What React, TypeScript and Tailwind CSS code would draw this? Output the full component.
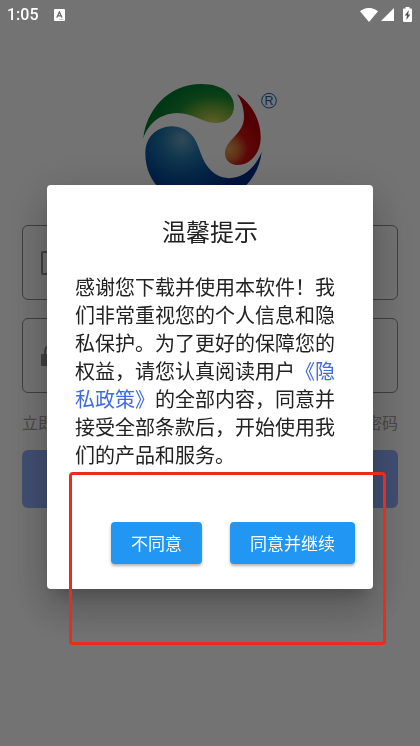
import { ReactNode } from 'react';

interface FieldProps {
  label: string;
  type: string;
  icon: ReactNode;
}

const Logo = () => (
  <svg viewBox="39 27 402 360" className="h-[120px] w-[134px]" role="img" aria-label="logo">
    <defs>
      <radialGradient id="green" gradientUnits="userSpaceOnUse" cx="248" cy="150" r="170" gradientTransform="translate(0 37) scale(1 .75)">
        <stop offset="0" stopColor="#dcd860" />
        <stop offset=".35" stopColor="#84b43c" />
        <stop offset=".7" stopColor="#188c34" />
        <stop offset="1" stopColor="#007a30" />
      </radialGradient>
      <radialGradient id="red" gradientUnits="userSpaceOnUse" cx="296" cy="222" r="115">
        <stop offset="0" stopColor="#e8a050" />
        <stop offset=".25" stopColor="#d87038" />
        <stop offset=".5" stopColor="#d01010" />
        <stop offset="1" stopColor="#b40008" />
      </radialGradient>
      <radialGradient id="blue" gradientUnits="userSpaceOnUse" cx="155" cy="195" r="190">
        <stop offset="0" stopColor="#6aa4c4" />
        <stop offset=".3" stopColor="#2478ac" />
        <stop offset=".6" stopColor="#08549c" />
        <stop offset="1" stopColor="#002c88" />
      </radialGradient>
    </defs>
    <path
      fill="url(#green)"
      d="M40 190C48 110 110 27 215 27C280 27 312 60 312 92C312 125 290 144 255 144C215 142 190 114 140 114C90 116 55 145 40 190Z"
    />
    <path
      fill="url(#red)"
      d="M321 57C365 85 392 135 392 188C392 235 360 270 322 270C300 270 285 255 285 235C287 190 342 180 342 125C342 100 335 78 321 57Z"
    />
    <path
      fill="url(#blue)"
      d="M395 231C375 280 340 309 297 310C255 308 228 280 212 235C198 190 180 156 125 154C75 156 46 190 46 235C46 330 120 387 215 387C310 387 385 320 395 231Z"
    />
    <circle cx="417" cy="77" r="22" fill="none" stroke="#1c5ca8" strokeWidth="3" />
    <text x="417" y="90" textAnchor="middle" fontSize="37" fill="#1c5ca8" className="font-['Liberation_Sans',sans-serif]">
      R
    </text>
  </svg>
);

const PhoneIcon = () => (
  <svg viewBox="0 0 24 24" className="h-6 w-6 text-[#8e8e8e]" fill="none" stroke="currentColor" strokeWidth="2">
    <rect x="1" y="1" width="16" height="22" rx="1" />
    <path d="M7 19h4" />
  </svg>
);

const LockIcon = () => (
  <svg viewBox="0 0 24 24" className="h-6 w-6 text-[#8e8e8e]" fill="none" stroke="currentColor" strokeWidth="2">
    <path d="M4 11V7a5 5 0 0 1 10 0v4" />
    <rect x="0" y="10" width="18" height="12" rx="1" fill="currentColor" stroke="none" />
  </svg>
);

const Field = ({ label, type, icon }: FieldProps) => (
  <label className="flex h-[75px] items-center gap-3 rounded-md border border-[#8c8c8c] px-[18px]">
    {icon}
    <input type={type} aria-label={label} className="min-w-0 flex-1 bg-transparent outline-none" />
  </label>
);

const StatusBar = () => (
  <div className="fixed inset-x-0 top-0 z-20 flex h-[29px] items-center justify-between pr-2 pl-[7px] text-white">
    <div className="flex items-center gap-[15px]">
      <span className="font-[Roboto,sans-serif] text-base font-medium">1:05</span>
      <svg viewBox="0 0 11 12" className="h-3 w-[11px]">
        <rect width="11" height="12" rx="1" fill="currentColor" />
        <path d="M2.8 8.5 5.4 3l2.6 5.5M3.7 6.8h3.4" fill="none" stroke="#666" strokeWidth="1.3" />
        <path d="M5.5 10.3h4" stroke="#888" strokeWidth=".8" strokeDasharray="1 .6" />
      </svg>
    </div>
    <div className="flex items-center">
      <svg viewBox="0 0 18 14" className="mr-[3px] h-[14px] w-[18px]" fill="currentColor">
        <path d="M0 3.2C5.5-1.1 12.5-1.1 18 3.2L9 14Z" />
      </svg>
      <svg viewBox="0 0 13 13" className="mr-[9px] h-[13px] w-[13px]" fill="currentColor">
        <path d="M13 0v13H0Z" />
      </svg>
      <svg viewBox="0 0 9 15" className="h-[15px] w-[9px]">
        <path d="M2.5 0h4v1.5H8a1 1 0 0 1 1 1V14a1 1 0 0 1-1 1H1a1 1 0 0 1-1-1V2.5a1 1 0 0 1 1-1h1.5Z" fill="currentColor" />
        <path d="M5.8 3 1.8 8.6h2.1L3.4 13l3.9-5.5H5.2Z" fill="#555" />
      </svg>
    </div>
  </div>
);

const LoginPage = () => (
  <main className="flex min-h-screen flex-col bg-white px-[22px] pt-[84px]">
    <div className="mb-[21px] flex justify-center">
      <Logo />
    </div>
    <div className="flex flex-col gap-[18px]">
      <Field label="手机号" type="tel" icon={<PhoneIcon />} />
      <Field label="密码" type="password" icon={<LockIcon />} />
    </div>
    <div className="flex h-[57px] items-center justify-between text-base text-[#a0a0a0]">
      <a href="#register">立即</a>
      <a href="#forgot">密码</a>
    </div>
    <button type="button" aria-label="登录" className="h-[58px] rounded-md bg-[#93afff]" />
  </main>
);

const buttonStyle =
  'h-[42px] rounded bg-[#2196f3] px-5 text-[17px] text-white shadow-[0_2px_3px_rgba(0,0,0,0.3)]';

const PrivacyDialog = () => (
  <div className="fixed inset-0 z-10 flex items-center justify-center bg-black/55 px-[47px] pt-7">
    <section
      role="dialog"
      aria-modal="true"
      aria-labelledby="privacy-title"
      className="w-full max-w-md rounded bg-white pt-[30px] pb-[25px] text-[#222] shadow-[0_11px_15px_-7px_rgba(0,0,0,0.2),0_24px_38px_3px_rgba(0,0,0,0.14),0_9px_46px_8px_rgba(0,0,0,0.12)]"
    >
      <h2 id="privacy-title" className="mb-[26px] text-center text-2xl">
        温馨提示
      </h2>
      <p className="px-7 text-xl">
        感谢您下载并使用本软件！我们非常重视您的个人信息和隐私保护。为了更好的保障您的权益，请您认真阅读用户
        <a href="#privacy" className="text-[#3f6ae0]">
          《隐私政策》
        </a>
        的全部内容，同意并接受全部条款后，开始使用我们的产品和服务。
      </p>
      <div className="mt-[53px] flex justify-end gap-7 pr-[18px]">
        <button type="button" className={buttonStyle}>
          不同意
        </button>
        <button type="button" className={buttonStyle}>
          同意并继续
        </button>
      </div>
    </section>
  </div>
);

const App = () => (
  <div className="font-['Noto_Sans_CJK_SC',sans-serif]">
    <LoginPage />
    <PrivacyDialog />
    <StatusBar />
    {/* highlight around the consent buttons */}
    <div className="pointer-events-none absolute top-[472px] right-[34px] left-[69px] z-30 h-[173px] rounded-sm border-3 border-[#ec2b20]" />
  </div>
);

export default App;
